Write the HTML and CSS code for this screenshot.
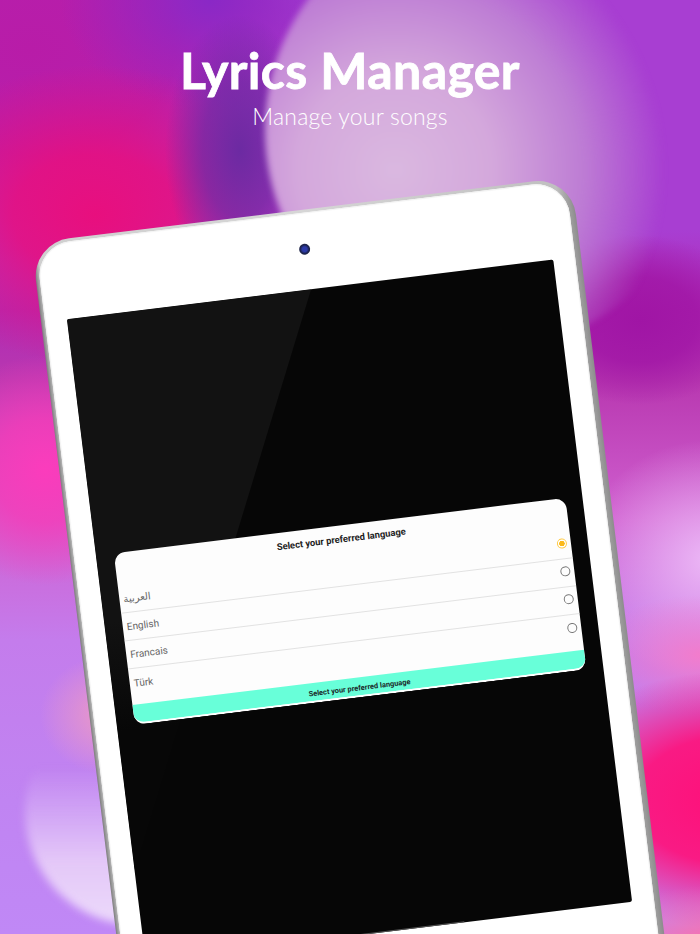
FILE: index.html
```html
<!DOCTYPE html>
<html lang="en">
<head>
<meta charset="utf-8">
<title>Lyrics Manager</title>
<link rel="stylesheet" href="styles.css">
</head>
<body>
<main class="stage">
  <div class="glow glow-top"></div>
  <div class="glow glow-bottom"></div>
  <header class="hero">
    <h1 class="hero-title">Lyrics Manager</h1>
    <p class="hero-sub">Manage your songs</p>
  </header>
  <div class="device">
    <div class="bezel">
      <span class="camera"></span>
      <div class="screen">
        <section class="dialog">
          <h2 class="dialog-title">Select your preferred language</h2>
          <ul class="lang-list">
            <li class="lang"><span class="lang-name">العربية</span><span class="radio radio-on"></span></li>
            <li class="lang"><span class="lang-name">English</span><span class="radio"></span></li>
            <li class="lang"><span class="lang-name">Francais</span><span class="radio"></span></li>
            <li class="lang"><span class="lang-name">Türk</span><span class="radio"></span></li>
          </ul>
          <div class="dialog-btn">Select your preferred language</div>
        </section>
        <span class="home-bar"></span>
      </div>
    </div>
  </div>
</main>
</body>
</html>
```
FILE: styles.css
```css
* { box-sizing: border-box; }
html, body { margin: 0; padding: 0; }
body { width: 700px; height: 934px; overflow: hidden; }
.stage {
  position: relative;
  width: 700px;
  height: 934px;
  overflow: hidden;
  background:
    radial-gradient(ellipse 75px 135px at 240px 150px, #6c2aa2 0%, rgba(108,42,162,.7) 50%, rgba(108,42,162,0) 100%),
    radial-gradient(ellipse 205px 150px at 95px 215px, #e80f7e 0%, rgba(232,15,126,.85) 40%, rgba(215,20,140,0) 100%),
    radial-gradient(ellipse 150px 110px at 210px 0, #8a28c6 0%, rgba(138,40,198,0) 100%),
    radial-gradient(ellipse 290px 210px at 30px 50px, #b81ca8 0%, rgba(184,28,168,.9) 50%, rgba(184,28,168,0) 100%),
    radial-gradient(ellipse 115px 85px at 640px 320px, #a015a5 0%, rgba(160,21,165,.8) 50%, rgba(160,21,165,0) 100%),
    radial-gradient(ellipse 120px 60px at 715px 945px, #ff6ea4 0%, rgba(255,110,164,0) 100%),
    radial-gradient(ellipse 210px 130px at 740px 800px, #ff0f78 0%, rgba(255,15,120,.9) 50%, rgba(255,40,130,0) 100%),
    radial-gradient(ellipse 110px 60px at 700px 655px, #f27ccc 0%, rgba(242,124,204,0) 100%),
    radial-gradient(ellipse 130px 120px at 710px 560px, #ecb8f6 0%, rgba(236,184,246,0) 100%),
    radial-gradient(ellipse 115px 115px at 45px 470px, #fb3cbc 0%, rgba(245,60,185,.8) 45%, rgba(240,70,190,0) 100%),
    radial-gradient(ellipse 70px 60px at 110px 715px, #ee9ac4 0%, rgba(238,154,196,0) 100%),
    linear-gradient(180deg, #a83ed2 0, #a83ed2 230px, #b02ab4 310px, #b838b0 380px, #d060d0 520px, #c47cec 640px, #c084f2 800px, #c088f6 934px);
}
.glow {
  position: absolute;
  border-radius: 50%;
}
.glow-top {
  left: 265px;
  top: -90px;
  width: 440px;
  height: 440px;
  filter: blur(3px);
  background: radial-gradient(circle 270px at 130px 260px, #dab8e0 0%, #d4a8dc 36%, #bd7cd4 70%, rgba(170,70,210,0) 100%);
}
.glow-bottom {
  left: 25px;
  top: 700px;
  width: 225px;
  height: 225px;
  filter: blur(4px);
  background: linear-gradient(180deg, rgba(238,216,250,0) 30%, #e4c8f8 72%, #ecdafb 100%);
}
.hero {
  position: relative;
  padding-top: 42px;
  text-align: center;
  color: #fff;
  font-family: "Lato", "Open Sans", sans-serif;
}
.hero-title {
  margin: 0;
  font-size: 50px;
  line-height: 56px;
  font-weight: 700;
  letter-spacing: 0.4px;
  -webkit-text-stroke: 0.8px #fff;
}
.hero-sub {
  margin: 0;
  padding-top: 3px;
  font-size: 23px;
  line-height: 30px;
  font-weight: 300;
  letter-spacing: 0.2px;
}
.device {
  position: absolute;
  left: 0;
  top: 0;
  width: 544px;
  height: 900px;
  transform-origin: 0 0;
  transform: rotate(-7deg) translate(1.5px, 245px);
  padding: 3px 6px 0 4px;
  border-radius: 38px;
  background: linear-gradient(90deg, #7e7e7e 0, #cfcfcf 1%, #d6d6d6 50%, #c0c0c0 97%, #8c8c8c 100%);
}
.bezel {
  position: relative;
  height: 100%;
  padding: 77px 0 0 22px;
  border-radius: 34px;
  background: #fff;
  box-shadow: inset 0 0 1px 1px #f2f2f2;
}
.camera {
  position: absolute;
  left: 50%;
  top: 31px;
  width: 11px;
  height: 11px;
  margin-left: -6.5px;
  border-radius: 50%;
  background: radial-gradient(circle at 50% 50%, #2c3aa8 0 30%, #1c2350 55%, #2a2c3a 100%);
}
.screen {
  position: relative;
  width: 490px;
  height: 647px;
  padding-top: 238px;
  padding-left: 18px;
  border-radius: 2px;
  background: #060606;
}
.screen::before {
  content: "";
  position: absolute;
  left: 0;
  top: 0;
  width: 246px;
  height: 555px;
  border-top-left-radius: 2px;
  clip-path: polygon(0 0, 100% 0, 0 100%);
  background: linear-gradient(180deg, #121212 55%, #070707 75%);
}
.dialog {
  position: relative;
  width: 455px;
  height: 173px;
  display: flex;
  flex-direction: column;
  border-radius: 11px;
  overflow: hidden;
  background: #fdfdfd;
  border-bottom: 2px solid #fff;
  font-family: "Roboto", "DejaVu Sans", sans-serif;
}
.dialog-title {
  margin: 0;
  height: 33px;
  padding-top: 6px;
  text-align: center;
  font-size: 9.4px;
  line-height: 16px;
  font-weight: 700;
  color: #222;
}
.lang-list {
  flex: 1;
  margin: 0;
  padding: 0;
  list-style: none;
}
.lang {
  height: 28px;
  padding: 0 4px 0 4px;
  display: flex;
  align-items: center;
  justify-content: space-between;
  border-bottom: 1px solid #e2e2e2;
  font-size: 10px;
  color: #666;
}
.lang:last-child { border-bottom: 0; }
.radio {
  width: 10px;
  height: 10px;
  border-radius: 50%;
  border: 1.3px solid #777;
  position: relative;
  top: -1.5px;
}
.radio-on {
  border-color: #ffcb45;
  background: radial-gradient(circle, #fbb91a 0 45%, #fff 52%);
}
.dialog-btn {
  height: 18px;
  text-align: center;
  background: #68ffd9;
  font-size: 7.4px;
  line-height: 21px;
  font-weight: 700;
  color: #1b2a2a;
}
.home-bar {
  position: absolute;
  left: 211px;
  bottom: 0;
  width: 110px;
  height: 1px;
  background: #555;
}
```
